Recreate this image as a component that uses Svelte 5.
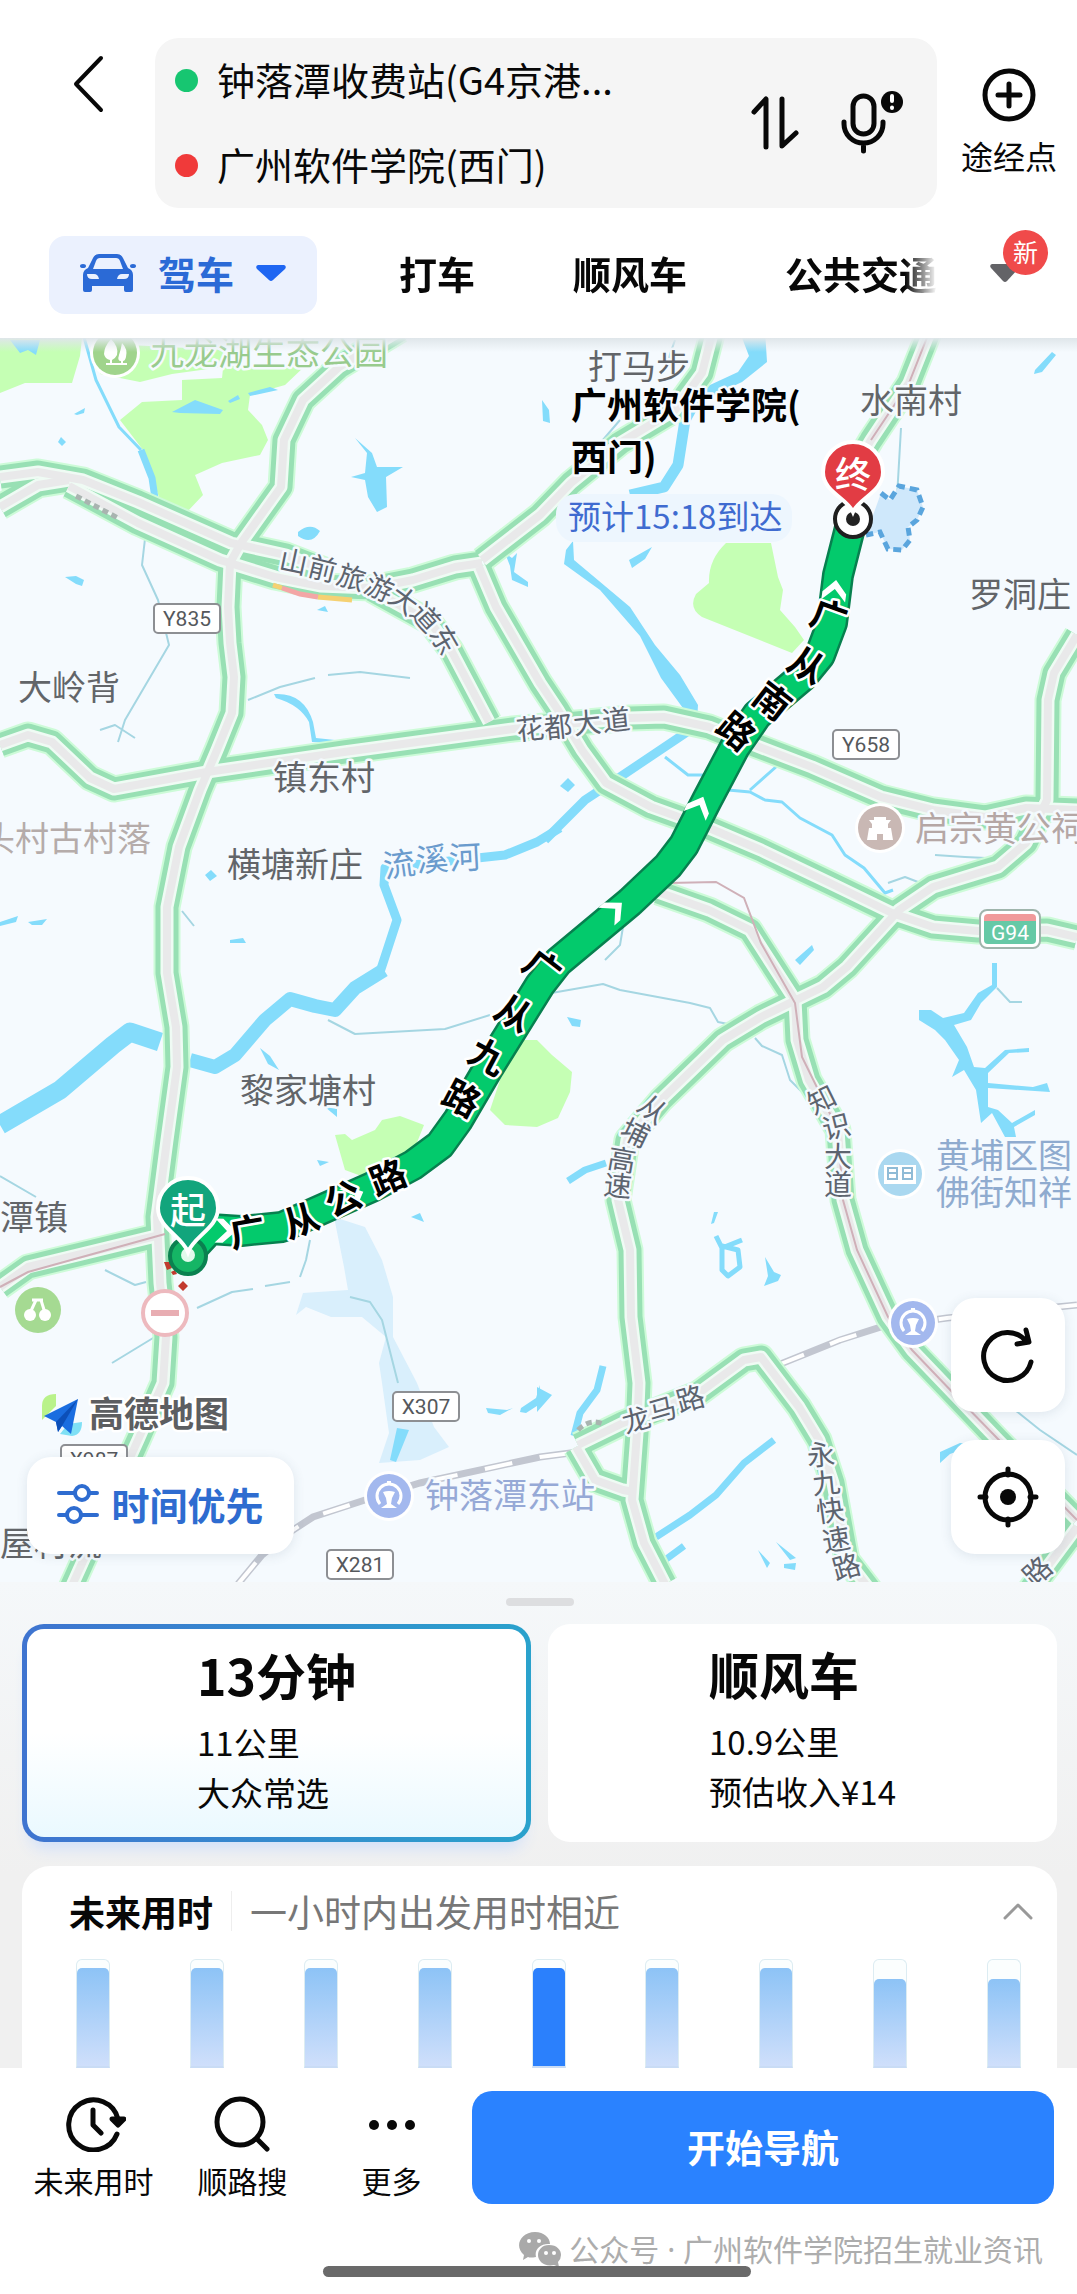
<script lang="ts">
	type Glyph = [string, number, number, number];

	const tabs = ['打车', '顺风车', '公共交通'];
	const bars = [92, 92, 92, 92, 92, 92, 92, 82, 82];
	const current = 4;

	let open = true;
	let start = '钟落潭收费站(G4京港...';
	let end = '广州软件学院(西门)';

	const roads = [
		'M0 507L38 485L69 480',
		'M0 477L38 472L83 480L138 502L231 543L286 555L330 572',
		'M69 486L138 523L220 560L275 577L320 586L372 588L413 580L455 567L482 563',
		'M372 590L430 622L451 650L489 722',
		'M482 560L540 515L571 483L620 443L675 410L702 373L713 330',
		'M0 745L28 735L52 742L90 778L114 789L207 772L344 752L513 729L630 718L664 717L709 727L757 746L812 767L881 797L933 810L985 817L1026 808L1077 810',
		'M479 567L496 607L540 683L558 710L582 750L606 783L651 807L709 828L761 850L830 883L892 913L933 927L978 931L1047 930L1077 937',
		'M1077 635L1054 673L1048 700L1047 800L1026 843L998 867L933 887L899 910L847 967L823 987L761 1017L723 1040L661 1100L627 1140L618 1200L630 1250L631 1317L639 1383L637 1433L632 1500L644 1543L665 1584',
		'M658 892L709 910L750 930L795 1000L797 1040L809 1080L838 1130L843 1200L857 1250L888 1317L912 1350L957 1397L998 1440L1077 1520',
		'M578 1445L623 1423L657 1410L699 1393L744 1360L761 1357L799 1407L819 1440L833 1483L847 1560L870 1590',
		'M576 1447L595 1480L623 1490L634 1492',
		'M0 1287L28 1267L160 1235',
		'M930 330L909 383L871 440L852 472',
		'M1077 1527L1030 1590',
		'M400 330L339 367L303 400L284 440L281 487L241 543L230 563L228 607L230 643L234 677L232 713L217 750L200 790L179 847L167 907L167 973L176 1027L177 1067L167 1140L157 1217L160 1283L166 1337L163 1383L138 1440L79 1570L70 1590'
	];

	const pinkLines = [
		'M668 883L716 882L744 898L761 943L795 1003L802 1057L838 1130L843 1200L857 1250L888 1317L912 1350L957 1397L1077 1520',
		'M0 1287L28 1272L165 1234',
		'M930 330L909 383L871 440'
	];

	const route =
		'M852 520L838 575L832 623L820 655L802 677L757 715L735 747L707 800L684 845L668 866L630 902L558 962L540 985L512 1030L489 1067L458 1120L440 1145L413 1165L372 1187L327 1207L282 1227L241 1231L210 1229L188 1253';

	const arrows = [
		[835, 588, 8],
		[700, 804, 24],
		[616, 908, 48],
		[356, 1195, 66],
		[228, 1231, 92]
	];

	const places = [
		['打马步', 588, 364],
		['水南村', 860, 398],
		['罗洞庄', 969, 592],
		['大岭背', 18, 685],
		['镇东村', 273, 775],
		['横塘新庄', 227, 862],
		['黎家塘村', 240, 1088],
		['潭镇', 0, 1215],
		['屋村流', 0, 1541]
	];

	const badges = [
		['Y835', 154, 604],
		['Y658', 833, 730],
		['X307', 393, 1392],
		['X281', 327, 1550],
		['X987', 61, 1445]
	];

	const roadNames: Glyph[] = [
		['山', 294, 560, 12], ['前', 323, 567, 14], ['旅', 352, 576, 18], ['游', 380, 586, 24],
		['大', 405, 599, 36], ['道', 427, 616, 48], ['东', 446, 639, 60],
		['花', 530, 727, -6], ['都', 558, 725, -6], ['大', 587, 721, -6], ['道', 616, 718, -6],
		['从', 654, 1108, 38], ['埔', 636, 1131, 26], ['高', 622, 1158, 10], ['速', 618, 1184, 6],
		['知', 821, 1098, -26], ['识', 836, 1125, -14], ['大', 838, 1155, 0], ['道', 838, 1183, 0],
		['龙', 636, 1418, -16], ['马', 662, 1408, -16], ['路', 690, 1397, -16],
		['永', 821, 1453, -4], ['九', 826, 1481, -6], ['快', 830, 1509, -8], ['速', 836, 1538, -10], ['路', 846, 1565, -16],
		['路', 1036, 1570, -42]
	];

	const riverNames: Glyph[] = [
		['流', 399, 862, -8], ['溪', 432, 857, -5], ['河', 465, 855, -3]
	];

	const routeNames: Glyph[] = [
		['广', 247, 1229, -10], ['从', 300, 1218, -20], ['公', 342, 1196, -24], ['路', 387, 1175, -22],
		['广', 544, 966, 38], ['从', 515, 1011, 30], ['九', 489, 1054, 28], ['路', 463, 1096, 28],
		['广', 830, 614, 20], ['从', 808, 663, 30], ['南', 774, 699, 38], ['路', 738, 729, 40]
	];
</script>

<div class="page">
	<header>
		<div class="search">
			<button class="back" aria-label="返回">
				<svg width="36" height="60" viewBox="0 0 36 60"><path d="M31 4L6 30L31 56" /></svg>
			</button>
			<div class="stops">
				<div class="fields">
					<label><span class="dot green"></span><input aria-label="起点" bind:value={start} /></label>
					<label><span class="dot red"></span><input aria-label="终点" bind:value={end} /></label>
				</div>
				<button aria-label="交换起终点">
					<svg width="48" height="58" viewBox="0 0 48 58"><path d="M3 18L15 5V53M31 5V52L45 39" /></svg>
				</button>
				<button aria-label="语音">
					<svg width="64" height="68" viewBox="0 0 64 68">
						<rect x="12" y="7" width="21" height="38" rx="10.5" />
						<path d="M3 33v2a19.5 19 0 0 0 39 0v-2M22.5 54v8" />
						<circle cx="51" cy="13" r="11" fill="#080808" stroke="none" />
						<path d="M51 7v5M51 18.5v.5" stroke="#fff" stroke-width="4" />
					</svg>
				</button>
			</div>
			<button class="via">
				<svg width="54" height="54" viewBox="0 0 54 54"><circle cx="27" cy="27" r="24" /><path d="M27 16v22M16 27h22" /></svg>
				途经点
			</button>
		</div>
		<nav>
			<button class="drive">
				<svg width="56" height="40" viewBox="0 0 56 40">
					<path fill-rule="evenodd" d="M19 1H37Q41 1 43 5L48 15Q53 17 53 22V37Q53 39 51 39H46Q44 39 44 37V33H12V37Q12 39 10 39H5Q3 39 3 37V22Q3 17 8 15L13 5Q15 1 19 1ZM20 5Q17 5 16 8L13 16H43L40 8Q39 5 36 5ZM7 21Q7 26 12 26H19Q18 21 14 21ZM49 21Q49 26 44 26H37Q38 21 42 21Z" />
					<ellipse cx="3" cy="13" rx="3" ry="2" /><ellipse cx="53" cy="13" rx="3" ry="2" />
				</svg>
				驾车
				<svg width="30" height="16" viewBox="0 0 30 16"><path class="bright" d="M2 0H28Q31 1 29 4L17 15Q15 17 13 15L1 4Q-1 1 2 0Z" /></svg>
			</button>
			<div class="tabs">
				{#each tabs as tab}
					<button>{tab}</button>
				{/each}
			</div>
			<button class="more-tabs" aria-label="更多出行方式">
				<svg width="30" height="18" viewBox="0 0 30 18"><path d="M2 0H28Q31 1 29 4L17 17Q15 19 13 17L1 4Q-1 1 2 0Z" /></svg>
				<span class="new">新</span>
			</button>
		</nav>
	</header>

	<section class="map">
		<svg class="canvas" viewBox="0 338 1077 1244">
			<defs>
				<path id="chevron" d="M-12 5L0 -8L12 5V13L0 1L-12 13Z" />
				<g id="metro">
					<circle r="25" fill="#fff" />
					<circle r="22" fill="#a3b8ee" />
					<path d="M-9 8A12 12 0 1 1 9 8" fill="none" stroke="#fff" stroke-width="3" />
					<path d="M-6 -4Q0 -6 6 -4L3 2L2 8L8 12H-8L-2 8L-3 2ZM-2 -15H2V-11H-2Z" fill="#fff" />
				</g>
				<linearGradient id="shade" x2="0" y2="1">
					<stop stop-color="#dfe6ea" />
					<stop offset="1" stop-color="#dfe6ea" stop-opacity="0" />
				</linearGradient>
			</defs>

			<rect y="338" width="1077" height="1244" fill="#f5fafe" />

			<g fill="#c5ffb4">
				<path d="M0 338H82L80 356L72 383H25L0 393ZM100 374L140 382L172 374L230 366H305L285 385L250 395L248 410L262 425L268 440L260 455L222 463L195 475L203 495L187 512L160 500L143 450L120 420L142 402L182 400V380L222 378L225 350L130 345Z" />
				<path d="M726 543H771L778 577L783 590L780 610L795 627L804 640L792 653L702 617Q688 608 696 594L709 583Q708 560 726 543Z" />
				<path d="M520 1040L537 1040L552 1055L572 1072L570 1092L558 1118L537 1127L505 1125L490 1110L500 1080Z" />
				<path d="M335 1135L345 1134L352 1140L375 1130L382 1120L400 1116L424 1125L410 1160L372 1180L345 1170Z" />
			</g>

			<path fill="#d9effc" d="M334 1217L365 1227L382 1260L393 1297V1337L417 1383L434 1427L449 1447L420 1460L379 1463L389 1433L382 1383L379 1363L386 1337L362 1317H331L306 1307L296 1315L303 1293L348 1290L344 1267Z" />

			<g fill="#84dcfb">
				<path d="M10 340H40L36 355L28 350L20 353ZM172 412L195 400L223 410L220 414L180 413ZM228 401L238 395L240 399L230 403ZM248 393L270 387L278 390L250 396Z" />
				<path d="M355 438L372 453L377 467L403 467L386 477L387 507L377 512L368 497L365 480L351 477L365 473L367 453Z" />
				<path d="M298 532Q310 522 320 531Q312 546 298 536ZM65 577L76 576L84 580L82 586L76 584ZM74 414L85 408L84 413L77 415ZM61 437L66 442L62 446L58 442ZM317 610L325 606L328 612Z" />
				<path d="M505 553L512 558L517 553L514 572L528 582V587L512 580L510 566Z" />
				<path d="M274 694Q304 692 313 722L316 738L335 740L333 743L312 742L309 722Q300 705 276 698Z" />
				<path d="M739 330H765L767 362L742 382L706 399L697 391L738 372L749 356Z" />
				<path d="M573 541L574 560L630 607L655 645L680 675L698 705L697 722L688 715L661 678L640 636L600 590L564 564L566 550Z" />
				<path d="M629 560L652 547L645 559L632 568ZM1035 370L1052 352L1056 355L1042 372L1034 374ZM542 400L549 410L550 423L543 421Z" />
				<path d="M919 1010L931 1010L943 1018L964 1013L978 993L992 985V963H997V987L981 1003L971 1020L954 1025L967 1047L974 1067L985 1068L1005 1050L1029 1048V1052L1009 1053L988 1073V1083L1033 1087L1047 1083L1050 1092L988 1088V1107L998 1110L1012 1123L1035 1110V1115L1014 1127L1016 1137H1005L992 1113L981 1123L976 1090L964 1070L952 1077L959 1060L945 1040L935 1030L919 1020Z" />
				<path d="M765 1257L774 1272L781 1275L778 1281L764 1286L768 1276ZM714 1212L718 1212L714 1223L711 1224ZM795 960L812 945L814 950L800 965ZM486 1408L507 1410L513 1408L500 1415L488 1413ZM521 1408L536 1398L540 1385V1404L526 1413L520 1412ZM758 1550L770 1563L767 1568ZM776 1542L796 1558L790 1560ZM784 1564L796 1563L795 1570L784 1568ZM560 786L568 778L575 785L568 792ZM567 1017L581 1020L580 1027L572 1026ZM205 875L211 870L217 876L210 881ZM230 940L243 938L246 943H230ZM260 1048L270 1056L279 1070L268 1064ZM325 1107L337 1109V1117ZM317 1160L329 1162L320 1166ZM411 1217L420 1213L424 1222ZM0 922L18 916L16 922L0 926ZM28 922L47 919L42 925L32 925ZM537 1387L552 1395L537 1412Z" />
				<path d="M940 1452L960 1443L975 1445L950 1454L940 1463ZM397 1428L409 1430L396 1462L390 1460Z" />
			</g>

			<g class="river">
				<path d="M82 330L96 380L119 427L141 450" stroke-width="3" />
				<path d="M141 450L152 478L156 505" stroke-width="7" />
				<path d="M697 398L685 420L678 465L664 487L630 495" stroke-width="11" />
				<path d="M690 730L620 777L585 800L545 840" stroke-width="9" />
				<path d="M560 828L537 842L505 855L385 868L384 885L397 920L380 972L355 987" stroke-width="9" />
				<path d="M384 970L355 988L335 1010L315 1006L290 999L265 1020L235 1055L215 1067L190 1060" stroke-width="14" />
				<path d="M160 1042L130 1032L113 1045L60 1090L0 1125" stroke-width="19" />
				<path d="M665 757L688 775H705M728 790L750 792L765 800L782 802L800 818L832 835L845 855L864 868L885 893L893 890M750 790L777 766" stroke-width="3" />
				<path d="M568 1181L585 1170L606 1163M774 1440L744 1463L716 1495L690 1515L656 1537M603 1366L597 1390L580 1413L574 1436M684 1546L665 1560" stroke-width="7" />
				<path d="M716 1236L722 1248L742 1240M722 1248V1270L728 1276L740 1267L738 1250L722 1246" stroke-width="5" />
			</g>
			<g class="brook">
				<path d="M146 530L142 565L158 600L169 645L125 720L118 742M100 730L115 725L135 738M248 700L280 687L315 678M328 675L360 672L410 678" />
				<path d="M328 1020L355 1034L445 1029L490 1015M182 911L194 926M540 995L603 984L620 990L690 1003L710 1008L718 1022L728 1024M755 1038L762 1046L782 1055L790 1080L805 1095" />
				<path d="M0 1176L36 1197M105 1270L135 1285L146 1282M197 1308L232 1292L253 1289M265 1286L290 1282M112 1363L158 1335M300 1277L306 1260L310 1240M350 1297L370 1302L382 1320L398 1383" />
				<path d="M901 428L896 515M997 988L1010 1002H1022M935 855L965 857L986 858M888 883L905 877L918 882M1015 1410L1040 1430L1077 1455M675 340L668 360M620 420L590 455M625 915L620 945L605 960" />
			</g>

			<g class="rail">
				<path d="M238 1584L262 1555L293 1530L313 1517L365 1500L420 1483L540 1457L578 1452M778 1365L840 1340L881 1327L947 1318L1077 1305" />
				<path class="dash" d="M238 1584L262 1555L293 1530L313 1517L365 1500L420 1483L540 1457L578 1452M778 1365L840 1340L881 1327L947 1318L1077 1305" />
			</g>

			{#each ['glow', 'edge', 'gap', 'core'] as layer}
				<g class="road {layer}">
					{#each roads as d}
						<path {d} />
					{/each}
				</g>
			{/each}
			{#each pinkLines as d}
				<path class="pink" {d} />
			{/each}

			<g fill="none" stroke-width="5">
				<path d="M273 585L282 588M318 597L352 600" stroke="#f5d172" />
				<path d="M282 588L300 594L318 597" stroke="#f3a6a6" />
				<path d="M76 496L118 518M578 1430Q590 1418 603 1424" stroke="#a9b4b0" stroke-dasharray="6 4" />
			</g>

			<path class="campus" d="M881 493L890 500L899 486L917 490L923 507L917 520L908 527L910 540L902 550L888 549L880 532L866 535" />

			<path class="route-edge" d={route} />
			<path class="route-fill" d={route} />
			{#each arrows as [x, y, r]}
				<use href="#chevron" fill="#fff" transform="translate({x} {y}) rotate({r})" />
			{/each}

			<g class="place">
				{#each places as [name, x, y]}
					<text {x} {y}>{name}</text>
				{/each}
				<text x="150" y="350" fill="#98cb8d">九龙湖生态公园</text>
				<text x="-19" y="836" fill="#b5acaa">头村古村落</text>
				<text x="915" y="826" fill="#b5a7a5">启宗黄公祠</text>
				<text x="936" y="1153" fill="#8fabcf">黄埔区图</text>
				<text x="936" y="1190" fill="#8fabcf">佛街知祥</text>
				<text x="425" y="1493" fill="#96a9d6">钟落潭东站</text>
			</g>

			{#each roadNames as [ch, x, y, r]}
				<text class="road-name" transform="translate({x} {y}) rotate({r})">{ch}</text>
			{/each}
			{#each riverNames as [ch, x, y, r]}
				<text class="river-name" transform="translate({x} {y}) rotate({r})">{ch}</text>
			{/each}
			{#each routeNames as [ch, x, y, r]}
				<text class="route-name" transform="translate({x} {y}) rotate({r})">{ch}</text>
			{/each}

			{#each badges as [code, x, y]}
				<g class="badge" transform="translate({x} {y})">
					<rect width="66" height="29" rx="4" />
					<text x="33" y="15">{code}</text>
				</g>
			{/each}
			<g transform="translate(980 910)">
				<rect width="60" height="38" rx="7" fill="#fff" stroke="#9fb5ac" stroke-width="2" />
				<path d="M4 11V8Q4 4 8 4H52Q56 4 56 8V11Z" fill="#f09a9a" />
				<path d="M4 11H56V30Q56 34 52 34H8Q4 34 4 30Z" fill="#66c9a6" />
				<text class="code" x="30" y="23" fill="#fff">G94</text>
			</g>

			<g transform="translate(115 353)">
				<circle r="25" fill="#fff" /><circle r="22" fill="#a0d48c" />
				<path d="M-4 -14Q4 -6 2 2Q0 6 -3 7V10H-5V7Q-10 6 -11 1Q-11 -6 -4 -14ZM7 -10Q13 -4 11 4Q10 8 8 8V10H6V8Q2 8 4 2Q6 -4 7 -10ZM-9 10H12V12H-9Z" fill="#fff" />
			</g>
			<g transform="translate(38 1310)">
				<circle r="23" fill="#a5da92" />
				<circle cx="-8" cy="5" r="6" fill="#fff" /><circle cx="7" cy="5" r="6" fill="#fff" />
				<path d="M-8 3L-2 -10H3L7 3M-6 -10H5" fill="none" stroke="#fff" stroke-width="3" />
			</g>
			<g transform="translate(880 828)">
				<circle r="25" fill="#fff" /><circle r="22" fill="#c9b8b4" />
				<path d="M-11 -8H11L8 -4V0H11L13 12H3V6H-3V12H-13L-11 0H-8V-4ZM-6 -11H6V-8H-6Z" fill="#fff" />
			</g>
			<g transform="translate(900 1174)">
				<circle r="25" fill="#fff" /><circle r="22" fill="#aad8f0" />
				<path d="M-16 -9H16V10H-16Z" fill="#fff" />
				<path d="M-12 -6H-3V5H-12ZM3 -6H12V5H3ZM-12 -1H-3M3 -1H12" fill="none" stroke="#8fbbd6" stroke-width="2" />
			</g>
			<use href="#metro" x="913" y="1323" />
			<use href="#metro" x="389" y="1496" />
			<g transform="translate(165 1313)">
				<circle r="22" fill="#fff" stroke="#edb9be" stroke-width="4" />
				<path d="M-14 0H14" stroke="#e8adb2" stroke-width="6" />
			</g>
			<path d="M164 1262l6 0 2 6-5 2zM171 1272l4-2 2 4-4 1zM183 1281l5 5-5 5-5-5z" fill="#c23a2e" />

			<g transform="translate(188 1208)">
				<circle cy="48" r="18" fill="#15b565" stroke="#0a8150" stroke-width="4" />
				<circle cy="47" r="7" fill="#e2faec" />
				<path class="pin" d="M0 44C-6 28 -30 20 -30 0A30 30 0 0 1 30 0C30 20 6 28 0 44Z" fill="#12a57c" />
				<text class="pin-text">起</text>
			</g>
			<g transform="translate(853 472)">
				<circle cy="47" r="18" fill="#fff" stroke="#1f1f1f" stroke-width="4" />
				<circle cy="47" r="7" fill="#222" />
				<path class="pin" d="M0 40C-6 26 -30 20 -30 0A30 30 0 0 1 30 0C30 20 6 26 0 40Z" fill="#e23c44" />
				<text class="pin-text">终</text>
			</g>

			<g class="target">
				<text x="571" y="403">广州软件学院(</text>
				<text x="571" y="455">西门)</text>
			</g>
			<rect x="556" y="494" width="236" height="48" rx="20" fill="#edf6fe" />
			<text class="eta" x="568" y="515">预计15:18到达</text>

			<g transform="translate(42 1394)">
				<path d="M0 12Q0 0 14 0V12L0 26Z" fill="#b9f28a" /><path d="M18 40L26 30L40 28Q40 41 30 42Z" fill="#7fe0f5" />
				<path d="M2 22L36 5L29 40L20 32L16 38L14 28Z" fill="#1a6de0" /><path d="M14 28L36 5L20 32L16 38Z" fill="#0c4fb8" />
			</g>
			<text class="brand" x="89" y="1411">高德地图</text>

			<rect y="338" width="1077" height="14" fill="url(#shade)" />
		</svg>

		<button class="float prefer">
			<svg width="42" height="40" viewBox="0 0 42 40">
				<path d="M2 9H17M33 9H40M2 31H9M25 31H40" /><circle cx="25" cy="9" r="7" /><circle cx="17" cy="31" r="7" />
			</svg>
			时间优先
		</button>
		<div class="tools">
			<button class="float" aria-label="刷新">
				<svg width="62" height="62" viewBox="0 0 62 62"><path d="M54 38A24 24 0 1 1 49 17M49 6L52 18L40 20" /></svg>
			</button>
			<button class="float" aria-label="定位">
				<svg width="62" height="62" viewBox="0 0 62 62">
					<circle cx="31" cy="31" r="23" /><path d="M31 3V9M31 53V59M3 31H9M53 31H59" />
					<circle cx="31" cy="31" r="8" fill="#080808" stroke="none" />
				</svg>
			</button>
		</div>
	</section>

	<main>
		<div class="handle"></div>
		<div class="options">
			<button class="option active">
				<span>
					<strong>13分钟</strong>
					<em>11公里</em>
					<em>大众常选</em>
				</span>
			</button>
			<button class="option">
				<span>
					<strong>顺风车</strong>
					<em>10.9公里</em>
					<em>预估收入¥14</em>
				</span>
			</button>
		</div>
		<section class="future">
			<div class="head">
				<h2>未来用时</h2>
				<p>一小时内出发用时相近</p>
				<button aria-label="收起" on:click={() => (open = !open)}>
					<svg width="30" height="18" viewBox="0 0 30 18"><path d="M2 16L15 3L28 16" /></svg>
				</button>
			</div>
			{#if open}
				<div class="bars">
					{#each bars as value, i}
						<div class="bar"><div class="fill" class:now={i === current} style="height: {value}%"></div></div>
					{/each}
				</div>
			{/if}
		</section>
	</main>

	<footer>
		<div class="actions">
			<button>
				<svg width="64" height="58" viewBox="0 0 64 58">
					<path d="M55 40A25 25 0 1 1 56 25M31 16V31L39 39" /><path d="M50 25L56 31L62 25Z" fill="#080808" />
				</svg>
				未来用时
			</button>
			<button>
				<svg width="64" height="58" viewBox="0 0 64 58"><circle cx="29" cy="28" r="23" /><path d="M46 45L56 55" /></svg>
				顺路搜
			</button>
			<button>
				<svg width="64" height="58" viewBox="0 0 64 58">
					<g fill="#080808" stroke="none"><circle cx="14" cy="31" r="5" /><circle cx="32" cy="31" r="5" /><circle cx="50" cy="31" r="5" /></g>
				</svg>
				更多
			</button>
			<button class="go">开始导航</button>
		</div>
		<div class="source">
			<svg width="42" height="36" viewBox="0 0 42 36">
				<path fill="#a9a9a9" d="M16 0C25 0 31 6 31 12C22 11 15 17 17 25Q11 26 9 25L4 28L5 23C-5 15 1 0 16 0Z" />
				<path fill="#a9a9a9" d="M30 13C38 13 42 18 42 23Q42 27 39 30L40 35L35 33C25 35 19 29 19 23C19 18 23 13 30 13Z" />
				<g fill="#fff"><circle cx="10" cy="9" r="2" /><circle cx="20" cy="9" r="2" /><circle cx="27" cy="21" r="2" /><circle cx="35" cy="21" r="2" /></g>
			</svg>
			公众号 · 广州软件学院招生就业资讯
		</div>
		<div class="home"></div>
	</footer>
</div>

<style>
	:global(body) {
		margin: 0;
		background: #fff;
	}

	.page {
		font-family: 'Noto Sans CJK SC', 'Noto Sans', sans-serif;
		color: #080808;
	}

	button {
		border: none;
		background: none;
		padding: 0;
		font: inherit;
		color: inherit;
		cursor: pointer;
	}

	button svg {
		display: block;
		fill: none;
		stroke: #080808;
		stroke-width: 5;
		stroke-linecap: round;
		stroke-linejoin: round;
	}

	header {
		padding: 38px 18px 24px 0;
	}

	.search {
		display: flex;
		align-items: center;
	}

	.back {
		width: 155px;
		height: 170px;
		display: flex;
		justify-content: center;
		padding: 16px 0 0 20px;
		box-sizing: border-box;
	}

	.back svg {
		stroke-width: 4;
	}

	.stops {
		flex: 1;
		display: flex;
		align-items: center;
		gap: 42px;
		height: 170px;
		padding: 0 32px 0 20px;
		box-sizing: border-box;
		background: #f5f5f5;
		border-radius: 24px;
	}

	.fields {
		flex: 1;
	}

	label {
		display: flex;
		align-items: center;
		gap: 19px;
		height: 85px;
	}

	input {
		flex: 1;
		width: 100%;
		border: none;
		background: none;
		padding: 0 0 4px;
		font: inherit;
		font-size: 38px;
		color: inherit;
		outline: none;
	}

	.dot {
		width: 23px;
		height: 23px;
		border-radius: 50%;
	}

	.green {
		background: #17c671;
	}

	.red {
		background: #f03a3a;
	}

	.via {
		width: 122px;
		margin-left: 11px;
		margin-right: -11px;
		display: flex;
		flex-direction: column;
		align-items: center;
		gap: 10px;
		font-size: 32px;
		line-height: 46px;
	}

	nav {
		display: flex;
		align-items: center;
		margin-top: 28px;
		padding-left: 49px;
	}

	nav button {
		font-size: 38px;
		font-weight: 700;
		line-height: 46px;
		padding-bottom: 4px;
	}

	.drive {
		display: flex;
		align-items: center;
		justify-content: center;
		gap: 22px;
		width: 268px;
		height: 78px;
		border-radius: 16px;
		background: #ebf1fe;
		color: #2b6ad6;
	}

	.drive svg {
		fill: #2b6ad6;
		stroke: none;
	}

	.drive .bright {
		fill: #1f66f2;
	}

	.tabs {
		flex: 1;
		display: flex;
		justify-content: space-between;
		margin-left: 82px;
		mask-image: linear-gradient(to left, transparent, #000 32px);
	}

	.more-tabs {
		position: relative;
		width: 69px;
		margin-left: 53px;
	}

	.more-tabs svg {
		fill: #636367;
		stroke: none;
	}

	.new {
		position: absolute;
		left: 13px;
		top: -34px;
		width: 45px;
		height: 45px;
		border-radius: 50%;
		background: #f04a4a;
		color: #fff;
		font-size: 25px;
		font-weight: 400;
		line-height: 43px;
	}

	.map {
		position: relative;
	}

	.canvas {
		display: block;
		width: 100%;
	}

	.river,
	.brook {
		fill: none;
		stroke: #84dcfb;
		stroke-linejoin: round;
	}

	.brook {
		stroke: #a5d6e2;
		stroke-width: 2;
	}

	.rail path {
		fill: none;
		stroke: #c2c6d0;
		stroke-width: 7;
	}

	.rail .dash {
		stroke: #fff;
		stroke-width: 4;
		stroke-dasharray: 28;
	}

	.road {
		fill: none;
		stroke-linejoin: round;
	}

	.glow {
		stroke: #cdfbd8;
		stroke-width: 27;
	}

	.edge {
		stroke: #98e0b4;
		stroke-width: 23;
	}

	.gap {
		stroke: #effbf4;
		stroke-width: 13;
	}

	.core {
		stroke: #e9e9ea;
		stroke-width: 8;
	}

	.pink {
		fill: none;
		stroke: #cfb0b8;
		stroke-width: 2;
	}

	.campus {
		fill: #cfe8fb;
		stroke: #5aa5dd;
		stroke-width: 5;
		stroke-dasharray: 8 5;
	}

	.route-edge,
	.route-fill {
		fill: none;
		stroke: #07804f;
		stroke-width: 32;
		stroke-linejoin: round;
	}

	.route-fill {
		stroke: #03ca6c;
		stroke-width: 27;
	}

	.canvas text {
		dominant-baseline: central;
		paint-order: stroke;
		stroke: #f5fafe;
		stroke-width: 5px;
		stroke-linejoin: round;
	}

	.place {
		font-size: 34px;
		fill: #626569;
	}

	.canvas .road-name,
	.canvas .river-name {
		font-size: 28px;
		fill: #5d646f;
		text-anchor: middle;
	}

	.canvas .river-name {
		font-size: 32px;
		fill: #6a9bcd;
	}

	.canvas .route-name {
		font-size: 36px;
		font-weight: 700;
		fill: #000;
		stroke: #fff;
		text-anchor: middle;
	}

	.badge rect {
		fill: #fff;
		stroke: #8d8f93;
		stroke-width: 2;
	}

	.badge text,
	.canvas .code {
		font-family: Roboto, sans-serif;
		font-size: 21px;
		text-anchor: middle;
		stroke: none;
	}

	.badge text {
		fill: #55585c;
	}

	.pin {
		stroke: #fff;
		stroke-width: 4;
	}

	.canvas .pin-text {
		font-size: 36px;
		font-weight: 500;
		fill: #fff;
		stroke: none;
		text-anchor: middle;
	}

	.target {
		font-size: 36px;
		font-weight: 700;
	}

	.canvas .eta {
		font-size: 33px;
		fill: #3f6bd0;
		stroke: none;
	}

	.canvas .brand {
		font-size: 35px;
		font-weight: 700;
		fill: #5c5e61;
		stroke: #fff;
	}

	.float {
		display: flex;
		align-items: center;
		justify-content: center;
		width: 114px;
		height: 114px;
		border-radius: 24px;
		background: #fff;
		box-shadow: 0 2px 12px rgba(60, 80, 110, 0.12);
	}

	.prefer {
		position: absolute;
		left: 27px;
		bottom: 28px;
		gap: 12px;
		width: 267px;
		height: 97px;
		padding-bottom: 4px;
		box-sizing: border-box;
		font-size: 38px;
		font-weight: 700;
		color: #2e6cd0;
	}

	.prefer svg {
		stroke: #2e6cd0;
		stroke-width: 4;
	}

	.tools {
		position: absolute;
		right: 12px;
		bottom: 28px;
		display: flex;
		flex-direction: column;
		gap: 28px;
	}

	main {
		padding: 16px 20px 0 22px;
		background: linear-gradient(#f5f8fa, #f0f0f0 60%);
	}

	.handle {
		width: 68px;
		height: 8px;
		margin: 0 auto 18px;
		border-radius: 4px;
		background: #dddee0;
	}

	.options {
		display: grid;
		grid-template-columns: 1fr 1fr;
		gap: 17px;
	}

	.option {
		display: flex;
		justify-content: center;
		padding: 16px 5px;
		height: 218px;
		box-sizing: border-box;
		border-radius: 22px;
		background: #fff;
		text-align: left;
	}

	.option.active {
		padding: 12px 0;
		border: 5px solid transparent;
		background:
			linear-gradient(#fff 50%, #eaf9ff) padding-box,
			linear-gradient(90deg, #3f74d0, #2aa2cc) border-box;
		box-shadow: 0 14px 16px -8px #cfdffa;
	}

	.option span {
		display: flex;
		flex-direction: column;
	}

	.option strong {
		margin-bottom: 10px;
		font-size: 50px;
		line-height: 66px;
		font-weight: 700;
	}

	.option em {
		font-size: 33px;
		line-height: 50px;
		font-style: normal;
	}

	.future {
		margin-top: 24px;
		padding: 20px 36px 0 47px;
		height: 202px;
		box-sizing: border-box;
		border-radius: 28px 28px 0 0;
		background: #fff;
	}

	.head {
		display: flex;
		align-items: center;
		height: 50px;
	}

	h2 {
		margin: 0;
		padding-right: 18px;
		border-right: 1px solid #eee;
		font-size: 36px;
		line-height: 40px;
	}

	p {
		flex: 1;
		margin: 0 0 0 18px;
		font-size: 37px;
		line-height: 50px;
		color: #777;
	}

	.head button {
		margin-right: -12px;
	}

	.head svg {
		stroke: #999;
		stroke-width: 3;
	}

	.bars {
		display: flex;
		justify-content: space-between;
		margin-top: 23px;
		padding-left: 7px;
	}

	.bar {
		display: flex;
		align-items: flex-end;
		width: 34px;
		height: 109px;
		box-sizing: border-box;
		border: 1px solid #dcecf2;
		border-bottom: 2px solid #c9dcf5;
		border-radius: 6px 6px 0 0;
		background: #fbfefe;
	}

	.fill {
		width: 100%;
		border-radius: 5px 5px 0 0;
		background: linear-gradient(#8dc3f6, #cfdffb);
	}

	.now {
		background: #2b80fc;
	}

	footer {
		padding: 23px 23px 16px 19px;
		background: #fff;
	}

	.actions {
		display: flex;
		align-items: center;
	}

	.actions button {
		display: flex;
		flex-direction: column;
		align-items: center;
		gap: 6px;
		width: 149px;
		font-size: 30px;
		line-height: 44px;
	}

	.actions .go {
		flex: 1;
		justify-content: center;
		height: 113px;
		margin-left: 6px;
		padding-bottom: 4px;
		border-radius: 20px;
		background: #2a82ff;
		color: #fff;
		font-size: 38px;
		font-weight: 700;
	}

	.source {
		display: flex;
		align-items: center;
		justify-content: flex-end;
		gap: 8px;
		margin: 24px 11px 0;
		font-family: 'Noto Sans', 'Noto Sans CJK SC', sans-serif;
		font-size: 30px;
		line-height: 44px;
		color: #adadad;
	}

	.home {
		width: 428px;
		height: 11px;
		margin: -6px auto 0;
		border-radius: 6px;
		background: #6a6a6a;
		position: relative;
	}
</style>
